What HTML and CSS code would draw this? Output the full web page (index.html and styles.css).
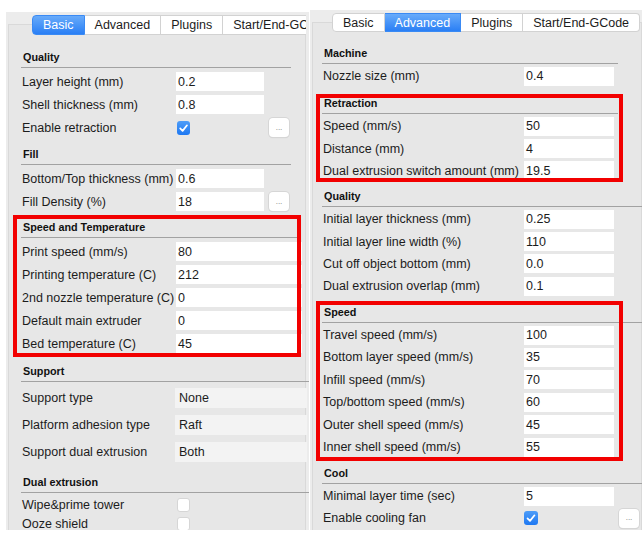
FILE: index.html
```html
<!DOCTYPE html>
<html>
<head>
<meta charset="utf-8">
<link rel="stylesheet" href="styles.css">
</head>
<body>
<div class="stage">
  <section class="win win-left">
    <div class="tabs">
      <span class="tab active">Basic</span><span class="tab">Advanced</span><span class="tab">Plugins</span><span class="tab">Start/End-GCode</span>
    </div>
    <div class="pane">
      <div class="sec l-quality">
        <div class="sh">Quality</div>
        <div class="row"><span class="lbl">Layer height (mm)</span><span class="inp">0.2</span></div>
        <div class="row"><span class="lbl">Shell thickness (mm)</span><span class="inp">0.8</span></div>
        <div class="row"><span class="lbl">Enable retraction</span><span class="cb on"><svg viewBox="0 0 13 14" width="13" height="14"><path d="M3.2 7.4 L5.6 9.9 L10 4.3" fill="none" stroke="#fff" stroke-width="1.7" stroke-linecap="round" stroke-linejoin="round"/></svg></span><span></span><span class="btn">...</span></div>
      </div>
      <div class="sec l-fill">
        <div class="sh">Fill</div>
        <div class="row"><span class="lbl">Bottom/Top thickness (mm)</span><span class="inp">0.6</span></div>
        <div class="row"><span class="lbl">Fill Density (%)</span><span class="inp">18</span><span></span><span class="btn">...</span></div>
      </div>
      <div class="sec l-speed hl">
        <div class="sh">Speed and Temperature</div>
        <div class="row"><span class="lbl">Print speed (mm/s)</span><span class="inp wide">80</span></div>
        <div class="row"><span class="lbl">Printing temperature (C)</span><span class="inp wide">212</span></div>
        <div class="row"><span class="lbl">2nd nozzle temperature (C)</span><span class="inp wide">0</span></div>
        <div class="row"><span class="lbl">Default main extruder</span><span class="inp wide">0</span></div>
        <div class="row"><span class="lbl">Bed temperature (C)</span><span class="inp wide">45</span></div>
      </div>
      <div class="sec l-support">
        <div class="sh">Support</div>
        <div class="row srow"><span class="lbl">Support type</span><span class="sel">None</span></div>
        <div class="row srow"><span class="lbl">Platform adhesion type</span><span class="sel">Raft</span></div>
        <div class="row srow"><span class="lbl">Support dual extrusion</span><span class="sel">Both</span></div>
      </div>
      <div class="sec l-dual">
        <div class="sh">Dual extrusion</div>
        <div class="row crow"><span class="lbl">Wipe&amp;prime tower</span><span class="cb off"></span></div>
        <div class="row crow"><span class="lbl">Ooze shield</span><span class="cb off"></span></div>
      </div>
    </div>
  </section>

  <section class="win win-right">
    <div class="tabs">
      <span class="tab">Basic</span><span class="tab active">Advanced</span><span class="tab">Plugins</span><span class="tab">Start/End-GCode</span>
    </div>
    <div class="pane">
      <div class="sec r-machine">
        <div class="sh">Machine</div>
        <div class="row"><span class="lbl">Nozzle size (mm)</span><span class="inp">0.4</span></div>
      </div>
      <div class="sec r-retraction hl">
        <div class="sh">Retraction</div>
        <div class="row"><span class="lbl">Speed (mm/s)</span><span class="inp">50</span></div>
        <div class="row"><span class="lbl">Distance (mm)</span><span class="inp">4</span></div>
        <div class="row"><span class="lbl">Dual extrusion switch amount (mm)</span><span class="inp">19.5</span></div>
      </div>
      <div class="sec r-quality">
        <div class="sh">Quality</div>
        <div class="row"><span class="lbl">Initial layer thickness (mm)</span><span class="inp">0.25</span></div>
        <div class="row"><span class="lbl">Initial layer line width (%)</span><span class="inp">110</span></div>
        <div class="row"><span class="lbl">Cut off object bottom (mm)</span><span class="inp">0.0</span></div>
        <div class="row"><span class="lbl">Dual extrusion overlap (mm)</span><span class="inp">0.1</span></div>
      </div>
      <div class="sec r-speed hl">
        <div class="sh">Speed</div>
        <div class="row"><span class="lbl">Travel speed (mm/s)</span><span class="inp">100</span></div>
        <div class="row"><span class="lbl">Bottom layer speed (mm/s)</span><span class="inp">35</span></div>
        <div class="row"><span class="lbl">Infill speed (mm/s)</span><span class="inp">70</span></div>
        <div class="row"><span class="lbl">Top/bottom speed (mm/s)</span><span class="inp">60</span></div>
        <div class="row"><span class="lbl">Outer shell speed (mm/s)</span><span class="inp">45</span></div>
        <div class="row"><span class="lbl">Inner shell speed (mm/s)</span><span class="inp">55</span></div>
      </div>
      <div class="sec r-cool">
        <div class="sh">Cool</div>
        <div class="row"><span class="lbl">Minimal layer time (sec)</span><span class="inp">5</span></div>
        <div class="row"><span class="lbl">Enable cooling fan</span><span class="cb on"><svg viewBox="0 0 14 14" width="14" height="14"><path d="M3.5 7.4 L6 9.9 L10.5 4.3" fill="none" stroke="#fff" stroke-width="1.7" stroke-linecap="round" stroke-linejoin="round"/></svg></span><span></span><span class="btn">...</span></div>
      </div>
    </div>
  </section>
</div>
</body>
</html>
```

FILE: styles.css
```css
* { box-sizing: border-box; }
html, body { margin: 0; padding: 0; }
body {
  width: 642px;
  height: 536px;
  overflow: hidden;
  background: #ffffff;
  font-family: "Liberation Sans", Arial, sans-serif;
  font-size: 12.5px;
  color: #1c1c1c;
}
.stage { display: flex; align-items: flex-start; }

.win {
  background: #ececec;
  display: flex;
  flex-direction: column;
  overflow: hidden;
  flex: none;
}
.win-left { margin: 12px 0 0 6px; width: 303px; height: 518px; padding-top: 3px; }
.win-right { margin: 10px 0 0 1px; width: 332px; height: 520px; padding-top: 3px; }

.tabs {
  display: flex;
  position: relative;
  z-index: 1;
  white-space: nowrap;
  overflow: hidden;
  flex: none;
}
.win-left .tabs { margin-left: 26px; width: 274px; height: 20px; }
.win-right .tabs { margin-left: 22px; height: 19px; }
.tab {
  background: #ffffff;
  border: 1px solid #d2d2d2;
  border-left: none;
  padding: 0 10px;
  display: flex;
  align-items: center;
  flex: none;
  color: #1c1c1c;
}
.tab:first-child { border-left: 1px solid #d2d2d2; border-radius: 4px 0 0 4px; }
.tab:last-child { border-radius: 0 4px 4px 0; }
.tab.active {
  background: linear-gradient(#68abfa, #2a7ff5);
  border-color: #3a8af4;
  color: #ffffff;
}

.pane {
  flex: 1;
  background: #e7e7e7;
  border: 1px solid #d9d9d9;
}
.win-left .pane { margin: -11px 3px 0 2px; padding: 22px 0 0 12px; }
.win-right .pane { margin: -10px 0 0 2px; padding: 20px 0 0 9px; }

.sec { position: relative; }
.sh {
  height: 21px;
  border-bottom: 1px solid #a2a2a2;
  font-weight: bold;
  font-size: 10.8px;
  color: #111;
  display: flex;
  align-items: center;
  padding-left: 2px;
}

.row { display: grid; align-items: center; }
.win-left .row { grid-template-columns: 155px 88px 5px 20px; height: 23px; }
.win-left .sh + .row { margin-top: 2px; }
.win-right .row { grid-template-columns: 202px 90px 5px 20px; height: 22.4px; }
.win-right .sh + .row { margin-top: 1px; }
.lbl { padding-left: 1px; white-space: nowrap; }

.inp {
  background: #ffffff;
  height: 19px;
  padding-left: 2px;
  display: flex;
  align-items: center;
  color: #1c1c1c;
}
.inp.wide { width: 126px; }

.sel {
  background: #f3f3f3;
  height: 20px;
  width: 132px;
  padding-left: 4px;
  display: flex;
  align-items: center;
}
.win-left .srow { grid-template-columns: 154px 132px; height: 27px; }
.win-left .crow { height: 19px; }

.cb { width: 13px; height: 14px; border-radius: 3px; display: block; margin-left: 1px; }
.win-right .cb { width: 14px; margin-left: 0; }
.cb svg { display: block; }
.cb.on { background: linear-gradient(#4e9df8, #1e78f2); }
.cb.off { background: #ffffff; border: 1px solid #d6d6d6; }

.btn {
  width: 20px;
  height: 19px;
  background: #ffffff;
  border-radius: 4px;
  box-shadow: 0 0 0 1px #d6d6d6, 0 1px 1px rgba(0, 0, 0, 0.12);
  font-size: 8px;
  color: #777;
  display: flex;
  align-items: center;
  justify-content: center;
  line-height: 1;
}

.l-quality, .l-fill { width: 270px; }
.l-fill { margin-top: 5px; }
.l-speed { width: 277px; margin-top: 4px; }
.l-support { width: 290px; margin-top: 6px; }
.l-dual { width: 290px; margin-top: 7px; }

.r-machine, .r-retraction { width: 296px; }
.r-retraction { margin-top: 5.6px; }
.r-quality { width: 330px; margin-top: 3.8px; }
.r-speed { width: 330px; margin-top: 4.4px; }
.r-cool { width: 330px; margin-top: 4.6px; }

.hl::after {
  content: "";
  position: absolute;
  border: 4px solid #f20000;
  pointer-events: none;
  z-index: 2;
}
.l-speed::after { top: -2px; left: -8px; right: -3px; bottom: -2px; }
.r-retraction::after { top: 1px; left: -6px; right: -5px; bottom: 0; }
.r-speed::after { top: -1px; left: -6px; right: 29px; bottom: -2.6px; }
```
